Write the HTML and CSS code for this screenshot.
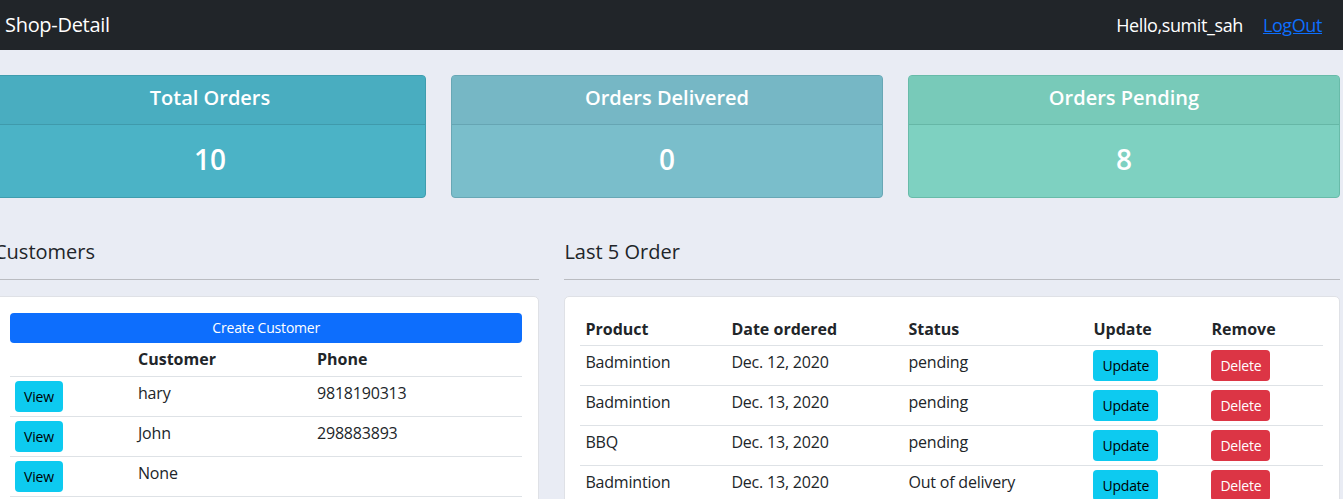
FILE: index.html
```html
<!DOCTYPE html>
<html lang="en">
<head>
<meta charset="utf-8">
<title>Shop-Detail</title>
<link rel="stylesheet" href="styles.css">
</head>
<body>
<nav class="navbar">
  <span class="brand">Shop-Detail</span>
  <div class="nav-right">
    <span class="hello">Hello,sumit_sah</span>
    <a class="logout" href="#">LogOut</a>
  </div>
</nav>
<main class="page">
  <div class="stats">
    <div class="stat stat-total">
      <div class="stat-head">Total Orders</div>
      <div class="stat-body">10</div>
    </div>
    <div class="stat stat-delivered">
      <div class="stat-head">Orders Delivered</div>
      <div class="stat-body">0</div>
    </div>
    <div class="stat stat-pending">
      <div class="stat-head">Orders Pending</div>
      <div class="stat-body">8</div>
    </div>
  </div>
  <div class="lower">
    <section class="col">
      <h5 class="sec-title">Customers</h5>
      <hr class="sec-rule">
      <div class="panel">
        <a class="btn btn-primary btn-block" href="#">Create Customer</a>
        <table class="tbl tbl-cust">
          <colgroup><col class="c1"><col class="c2"><col class="c3"></colgroup>
          <thead><tr><th></th><th>Customer</th><th>Phone</th></tr></thead>
          <tbody>
            <tr><td><a class="btn btn-info" href="#">View</a></td><td>hary</td><td>9818190313</td></tr>
            <tr><td><a class="btn btn-info" href="#">View</a></td><td>John</td><td>298883893</td></tr>
            <tr><td><a class="btn btn-info" href="#">View</a></td><td>None</td><td></td></tr>
            <tr><td><a class="btn btn-info" href="#">View</a></td><td>None</td><td></td></tr>
          </tbody>
        </table>
      </div>
    </section>
    <section class="col">
      <h5 class="sec-title">Last 5 Order</h5>
      <hr class="sec-rule">
      <div class="panel">
        <table class="tbl tbl-order">
          <colgroup><col class="o1"><col class="o2"><col class="o3"><col class="o4"><col class="o5"></colgroup>
          <thead><tr><th>Product</th><th>Date ordered</th><th>Status</th><th>Update</th><th>Remove</th></tr></thead>
          <tbody>
            <tr><td>Badmintion</td><td>Dec. 12, 2020</td><td>pending</td><td><a class="btn btn-info" href="#">Update</a></td><td><a class="btn btn-danger" href="#">Delete</a></td></tr>
            <tr><td>Badmintion</td><td>Dec. 13, 2020</td><td>pending</td><td><a class="btn btn-info" href="#">Update</a></td><td><a class="btn btn-danger" href="#">Delete</a></td></tr>
            <tr><td>BBQ</td><td>Dec. 13, 2020</td><td>pending</td><td><a class="btn btn-info" href="#">Update</a></td><td><a class="btn btn-danger" href="#">Delete</a></td></tr>
            <tr><td>Badmintion</td><td>Dec. 13, 2020</td><td>Out of delivery</td><td><a class="btn btn-info" href="#">Update</a></td><td><a class="btn btn-danger" href="#">Delete</a></td></tr>
            <tr><td>BBQ</td><td>Dec. 13, 2020</td><td>pending</td><td><a class="btn btn-info" href="#">Update</a></td><td><a class="btn btn-danger" href="#">Delete</a></td></tr>
          </tbody>
        </table>
      </div>
    </section>
  </div>
</main>
</body>
</html>
```

FILE: styles.css
```css
* { box-sizing: border-box; }
html, body { margin: 0; padding: 0; }
body {
  background: #e9ecf4;
  font-family: "Open Sans", "Noto Sans", sans-serif;
  font-size: 16px;
  line-height: 24px;
  color: #212529;
  overflow: hidden;
}
.navbar {
  height: 50px;
  background: #212529;
  display: flex;
  align-items: center;
  justify-content: space-between;
  padding: 0 21px 0 5px;
}
.brand { color: #fff; font-size: 20px; letter-spacing: -0.3px; }
.nav-right { display: flex; align-items: center; gap: 20px; font-size: 18px; }
.hello { color: #fff; letter-spacing: -0.4px; }
.logout { color: #0d6efd; text-decoration: underline; letter-spacing: -0.4px; }

.page { margin-left: -6px; width: 1346px; }
.stats {
  display: grid;
  grid-template-columns: repeat(3, 1fr);
  gap: 25px;
  margin-top: 25px;
}
.stat { border-radius: 4px; border: 1px solid; overflow: hidden; color: #fff; text-align: center; font-weight: 600; }
.stat-head { font-size: 20px; line-height: 24px; padding: 10px 0 14px; border-bottom: 1px solid; }
.stat-body { font-size: 28px; line-height: 40px; padding: 14px 0 18px; }
.stat-total { border-color: #3f9dae; background: #4bb3c6; }
.stat-total .stat-head { background: #49adc0; border-color: #3f9aab; }
.stat-delivered { border-color: #68a7b5; background: #7abecb; }
.stat-delivered .stat-head { background: #76b7c5; border-color: #66a5b3; }
.stat-pending { border-color: #68bba9; background: #7ed1c1; }
.stat-pending .stat-head { background: #78cab9; border-color: #66b7a6; }

.lower {
  display: grid;
  grid-template-columns: 545fr 775fr;
  gap: 25px;
  margin-top: 42px;
}
.sec-title { margin: 0; font-size: 20px; line-height: 24px; font-weight: 500; }
.sec-rule { margin: 15px 0 16px; border: 0; border-top: 1px solid #babcc1; }
.panel {
  background: #fff;
  border: 1px solid #dfe1e6;
  border-radius: 5px;
  padding: 16px 16px 16px 15px;
  min-height: 260px;
}
.btn {
  display: inline-block;
  font-size: 14px;
  line-height: 21px;
  padding: 4px 8px;
  border: 1px solid transparent;
  border-radius: 4px;
  text-decoration: none;
  text-align: center;
  letter-spacing: -0.2px;
}
.btn-block { display: block; width: 100%; line-height: 20px; }
.btn-primary { background: #0d6efd; color: #fff; }
.btn-info { background: #0dcaf0; color: #000; }
.btn-danger { background: #dc3545; color: #fff; }

.tbl { width: 100%; border-collapse: collapse; table-layout: fixed; }
.tbl th, .tbl td { text-align: left; vertical-align: top; padding: 4px 5px 4px; border-bottom: 1px solid #dee2e6; }
.tbl td { letter-spacing: -0.2px; }
.tbl th { font-weight: 700; }
.tbl-cust th { padding-bottom: 5px; }
.c1 { width: 123px; }
.c2 { width: 179px; }
.o1 { width: 146px; }
.o2 { width: 177px; }
.o3 { width: 185px; }
.o4 { width: 118px; }
```
